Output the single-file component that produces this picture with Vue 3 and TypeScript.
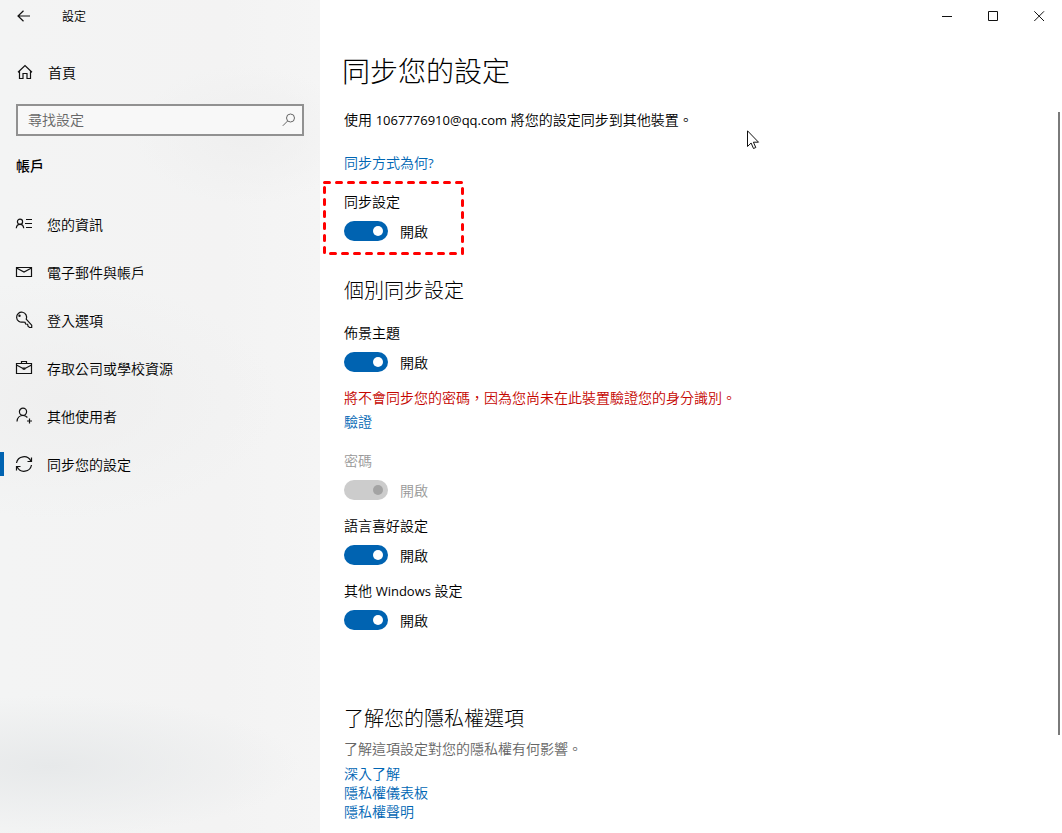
<script setup lang="ts">
import { ref } from 'vue'

interface NavItem {
  label: string
  icon: string
  active?: boolean
}

interface SyncOption {
  id: string
  label: string
  latin?: string
  tail?: string
  on: boolean
  disabled?: boolean
}

const query = ref('')

const navItems: NavItem[] = [
  { label: '您的資訊', icon: 'info' },
  { label: '電子郵件與帳戶', icon: 'mail' },
  { label: '登入選項', icon: 'key' },
  { label: '存取公司或學校資源', icon: 'case' },
  { label: '其他使用者', icon: 'user' },
  { label: '同步您的設定', icon: 'sync', active: true },
]

const master = ref<SyncOption>({ id: 'sync', label: '同步設定', on: true })
const theme = ref<SyncOption>({ id: 'theme', label: '佈景主題', on: true })
const others = ref<SyncOption[]>([
  { id: 'password', label: '密碼', on: true, disabled: true },
  { id: 'language', label: '語言喜好設定', on: true },
  { id: 'windows', label: '其他 ', latin: 'Windows', tail: ' 設定', on: true },
])

const privacyLinks: string[] = ['深入了解', '隱私權儀表板', '隱私權聲明']
</script>

<template>
  <div class="window">
    <aside class="sidebar">
      <header class="titlebar">
        <button class="back" type="button" aria-label="返回">
          <svg width="14" height="12" viewBox="0 0 14 12"><path d="M6.5 .8 1 6l5.500 5.200M1 6h12" /></svg>
        </button>
        <span class="app-name caption">設定</span>
      </header>

      <a class="home" href="#">
        <svg width="16" height="16" viewBox="0 0 16 16"><path d="M1 8.200 8 1.500l7 6.700M2.500 7v7.500h3.500V9.500h4v5h3.500V7" /></svg>
        <span class="caption">首頁</span>
      </a>

      <label class="search">
        <input v-model="query" type="text" placeholder="尋找設定" aria-label="尋找設定" />
        <svg width="14" height="14" viewBox="0 0 14 14"><circle cx="8.500" cy="5" r="4" /><path d="M5.600 8 .8 12.800" /></svg>
      </label>

      <h2 class="section">帳戶</h2>

      <nav class="nav">
        <a v-for="item in navItems" :key="item.icon" href="#" class="nav-item" :class="{ active: item.active }">
          <svg width="18" height="18" viewBox="0 0 18 18">
            <template v-if="item.icon === 'info'">
              <circle cx="5" cy="6.800" r="2.600" />
              <path d="M1.300 13.300c.2-2.400 1.700-3.900 3.700-3.900s3.500 1.500 3.700 3.900M11 4.500h6M10 8.500h7M11 12.500h6" />
            </template>
            <template v-else-if="item.icon === 'mail'">
              <path d="M1.500 4.500h15v9h-15zM1.500 5l7.500 4 7.500-4" />
            </template>
            <template v-else-if="item.icon === 'key'">
              <path d="M11.200 8.200A5 5 0 1 0 8 11l2 .2.600 1.800 2 .2.400 2 1.500 1.300h2.200v-2.300z" />
              <circle cx="4.500" cy="4.800" r=".6" />
            </template>
            <template v-else-if="item.icon === 'case'">
              <path d="M1.500 4.500h15v10h-15zM6.500 4.500v-2h5v2M1.500 6l5.500 3h4l5.500-3M7.500 8.500c0 2.400 3 2.400 3 0" />
            </template>
            <template v-else-if="item.icon === 'user'">
              <circle cx="8" cy="4.800" r="3.600" />
              <path d="M2 14.500c.3-3.700 2.600-6 6-6 1.900 0 3.300.7 4.400 2M14.500 11.500v5M12 14h5" />
            </template>
            <template v-else>
              <path d="M1.500 8A7.600 7.600 0 0 1 15.800 6M16.500 2.500V6.500h-4M16.500 10A7.600 7.600 0 0 1 2.200 12M1.500 15.500v-4h4" />
            </template>
          </svg>
          <span class="caption">{{ item.label }}</span>
        </a>
      </nav>
    </aside>

    <main class="content">
      <div class="captions">
        <button type="button" aria-label="最小化"><svg width="11" height="11" viewBox="0 0 11 11"><path d="M0 5.500h10" /></svg></button>
        <button type="button" aria-label="最大化"><svg width="11" height="11" viewBox="0 0 11 11"><path d="M.5 .5h9v9h-9z" /></svg></button>
        <button type="button" aria-label="關閉"><svg width="11" height="11" viewBox="0 0 11 11"><path d="M.3 .3l9.700 9.700M10 .3.300 10" /></svg></button>
      </div>

      <h1>同步您的設定</h1>
      <p class="account">使用 <span class="latin">1067776910@qq.com</span> 將您的設定同步到其他裝置。</p>
      <a class="link how" href="#">同步方式為何<span class="latin">?</span></a>

      <div class="option master">
        <label :for="master.id">{{ master.label }}</label>
        <div class="row">
          <input :id="master.id" v-model="master.on" class="toggle" type="checkbox" role="switch" />
          <span class="caption">{{ master.on ? '開啟' : '關閉' }}</span>
        </div>
        <svg class="highlight" width="141" height="74" viewBox="0 0 141 74" aria-hidden="true">
          <rect x="1.500" y="1.500" width="138" height="71" />
        </svg>
      </div>

      <h2>個別同步設定</h2>

      <div class="option">
        <label :for="theme.id">{{ theme.label }}</label>
        <div class="row">
          <input :id="theme.id" v-model="theme.on" class="toggle" type="checkbox" role="switch" />
          <span class="caption">{{ theme.on ? '開啟' : '關閉' }}</span>
        </div>
      </div>

      <p class="warning">將不會同步您的密碼，因為您尚未在此裝置驗證您的身分識別。</p>
      <a class="link verify" href="#">驗證</a>

      <div class="options">
        <div v-for="option in others" :key="option.id" class="option" :class="{ disabled: option.disabled }">
          <label :for="option.id">{{ option.label }}<span v-if="option.latin" class="latin">{{ option.latin }}</span>{{ option.tail }}</label>
          <div class="row">
            <input :id="option.id" v-model="option.on" class="toggle" type="checkbox" role="switch" :disabled="option.disabled" />
            <span class="caption">{{ option.on ? '開啟' : '關閉' }}</span>
          </div>
        </div>
      </div>

      <section class="privacy">
        <h2>了解您的隱私權選項</h2>
        <p>了解這項設定對您的隱私權有何影響。</p>
        <a v-for="text in privacyLinks" :key="text" class="link" href="#">{{ text }}</a>
      </section>

      <div class="scroll-thumb"></div>
      <svg class="pointer" width="13" height="20" viewBox="0 0 13 20" aria-hidden="true">
        <path d="M.5 .8v15.700l3.600-3.500 2.400 5.500 2.300-1-2.400-5.300h5.100z" />
      </svg>
    </main>
  </div>
</template>

<style>
body {
  margin: 0;
  background: #fff;
}
</style>

<style scoped>
.window {
  display: grid;
  grid-template-columns: 320px 1fr;
  min-height: 100vh;
  font-family: "Open Sans", "Noto Sans CJK TC", sans-serif;
  font-size: 14px;
  font-weight: 350;
  line-height: 20px;
  color: #000;
}

h1,
h2,
p {
  margin: 0;
}

h1,
h2 {
  font-weight: 300;
}

a {
  color: inherit;
  text-decoration: none;
}

svg {
  display: block;
  flex: none;
  fill: none;
  stroke: #111;
  stroke-width: 1.2;
}

button {
  display: flex;
  align-items: center;
  justify-content: center;
  padding: 0;
  border: 0;
  background: none;
}

.caption {
  padding-top: 2px;
}

.sidebar {
  background:
    radial-gradient(ellipse 250px 70px at 50px 766px, #e7e9ea, #e7e9ea00),
    radial-gradient(ellipse 110px 70px at 245px 135px, #efefef, #efefef00),
    radial-gradient(ellipse 220px 120px at 60px 400px, #efefef, #efefef00),
    linear-gradient(90deg, #f3f4f4, #f3f3f3 70%, #f5f5f5);
}

.titlebar {
  display: flex;
  align-items: center;
  height: 32px;
  font-size: 12px;
}

.back {
  width: 48px;
  height: 32px;
}

.app-name {
  margin-left: 14px;
}

.home {
  display: flex;
  align-items: center;
  gap: 15px;
  height: 48px;
  margin-top: 16px;
  padding-left: 17px;
}

.search {
  display: flex;
  align-items: center;
  height: 28px;
  margin: 8px 16px 0;
  padding: 0 6px 0 10px;
  border: 2px solid #919191;
  background: #f8f8f8;
}

.search svg {
  stroke: #666;
  stroke-width: 1;
}

.search input {
  flex: 1;
  min-width: 0;
  padding: 0;
  border: 0;
  outline: 0;
  background: none;
  font: inherit;
}

.search input::placeholder {
  color: #666;
  opacity: 1;
}

.section {
  margin: 20px 16px 0;
  font-size: 14px;
  font-weight: 500;
  line-height: 20px;
}

.nav {
  margin-top: 24px;
}

.nav-item {
  display: flex;
  align-items: center;
  gap: 14px;
  position: relative;
  height: 48px;
  padding-left: 15px;
}

.nav-item.active::before {
  content: "";
  position: absolute;
  left: 0;
  top: 12px;
  width: 4px;
  height: 24px;
  background: #0063b1;
}

.content {
  position: relative;
  display: flex;
  flex-direction: column;
  align-items: flex-start;
  padding: 51px 24px 11px;
}

.captions {
  position: absolute;
  top: 0;
  right: 0;
  display: flex;
}

.captions button {
  width: 46px;
  height: 32px;
}

.captions svg {
  stroke-width: 1;
}

h1 {
  margin-left: -2px;
  font-size: 28px;
  line-height: 40px;
}

.content h2 {
  font-size: 20px;
  line-height: 28px;
}

.latin {
  font-size: 13px;
  font-weight: 400;
}

.link {
  color: #0066b4;
}

.account {
  margin-top: 19px;
}

.how {
  margin-top: 23px;
}

.option {
  position: relative;
}

.option label {
  display: block;
}

.row {
  display: flex;
  align-items: center;
  gap: 12px;
  height: 20px;
  margin-top: 9px;
}

.master {
  margin: 19px 0 36px;
}

.highlight {
  position: absolute;
  left: -21px;
  top: -11px;
  pointer-events: none;
  stroke: #f00;
  stroke-width: 3;
  stroke-dasharray: 5 7;
  stroke-linecap: round;
}

.content > h2 {
  margin-bottom: 18px;
}

.toggle {
  appearance: none;
  display: flex;
  align-items: center;
  justify-content: flex-start;
  width: 44px;
  height: 20px;
  margin: 0;
  padding: 0 5px;
  box-sizing: border-box;
  border-radius: 10px;
  background: #999;
}

.toggle::before {
  content: "";
  width: 10px;
  height: 10px;
  border-radius: 50%;
  background: #fff;
}

.toggle:checked {
  justify-content: flex-end;
  background: #0063b1;
}

.toggle:disabled {
  background: #ccc;
}

.toggle:disabled::before {
  background: #a3a3a3;
}

.disabled {
  color: #999;
}

.warning {
  margin-top: 16px;
  color: #c50500;
}

.verify {
  margin: 4px 0 19px;
}

.options {
  display: grid;
  gap: 16px;
}

.privacy {
  display: flex;
  flex-direction: column;
  align-items: flex-start;
  margin-top: 75px;
}

.privacy p {
  margin: 6px 0 5px;
  color: #666;
}

.privacy .link {
  line-height: 19px;
}

.scroll-thumb {
  position: absolute;
  top: 112px;
  right: 2px;
  bottom: 98px;
  width: 2px;
  background: #7a7a7a;
}

.pointer {
  position: absolute;
  left: 427px;
  top: 130px;
  fill: #fff;
  stroke-width: 1;
}
</style>
